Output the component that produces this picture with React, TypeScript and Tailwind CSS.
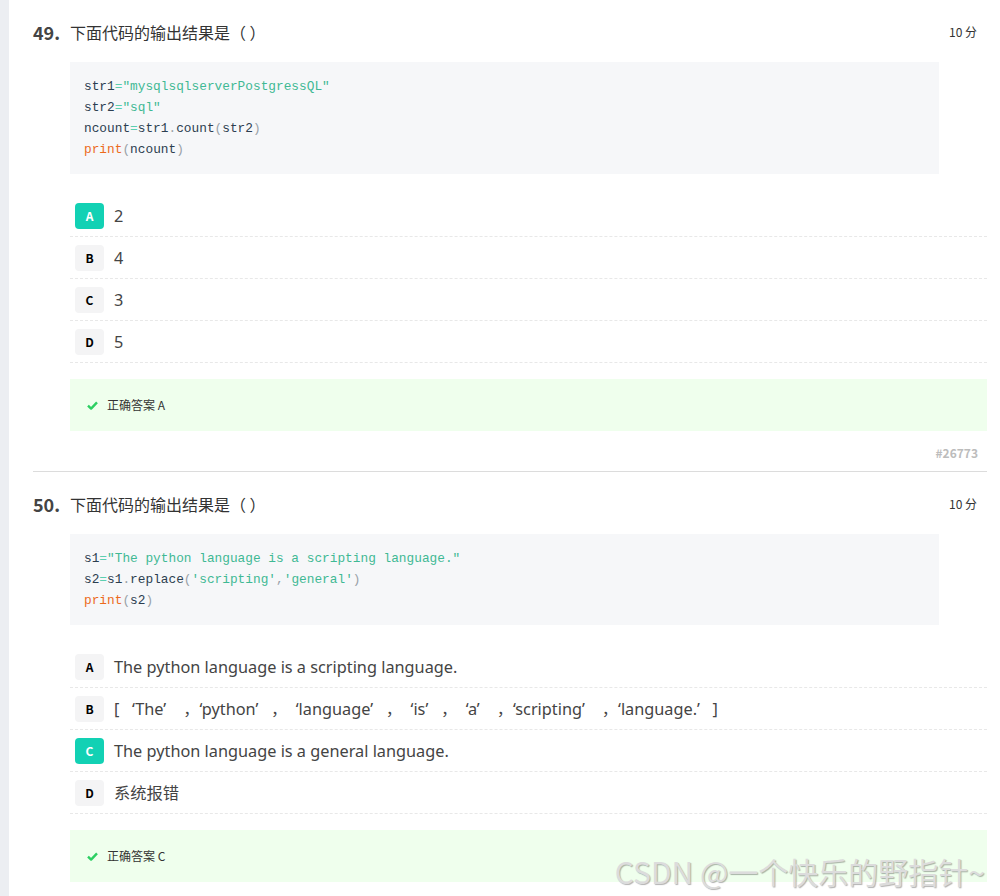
const cjk = "font-['Noto_Sans_CJK_SC',sans-serif]";
const latin = "font-['Noto_Sans','Noto_Sans_CJK_SC',sans-serif]";
const mono = "font-['Liberation_Mono',monospace]";

type Tok = [string, string];

const C = {
  id: "text-[#2c3e50]",
  op: "text-[#5ccfb0]",
  str: "text-[#3fb994]",
  pun: "text-[#9aa2a8]",
  fn: "text-[#ec6a1c]",
};

const q49Code: Tok[][] = [
  [["str1", C.id], ["=", C.op], ['"mysqlsqlserverPostgressQL"', C.str]],
  [["str2", C.id], ["=", C.op], ['"sql"', C.str]],
  [["ncount", C.id], ["=", C.op], ["str1", C.id], [".", C.pun], ["count", C.id], ["(", C.pun], ["str2", C.id], [")", C.pun]],
  [["print", C.fn], ["(", C.pun], ["ncount", C.id], [")", C.pun]],
];

const q50Code: Tok[][] = [
  [["s1", C.id], ["=", C.op], ['"The python language is a scripting language."', C.str]],
  [["s2", C.id], ["=", C.op], ["s1", C.id], [".", C.pun], ["replace", C.id], ["(", C.pun], ["'scripting'", C.str], [",", C.pun], ["'general'", C.str], [")", C.pun]],
  [["print", C.fn], ["(", C.pun], ["s2", C.id], [")", C.pun]],
];

const questions = [
  {
    num: "49.",
    code: q49Code,
    options: ["2", "4", "3", "5"],
    answer: "A",
    id: "#26773",
  },
  {
    num: "50.",
    code: q50Code,
    options: [
      "The python language is a scripting language.",
      "[   ‘The’    ，‘python’   ，  ‘language’   ，  ‘is’   ，  ‘a’    ，‘scripting’    ，‘language.’   ]",
      "The python language is a general language.",
      "系统报错",
    ],
    answer: "C",
    id: "",
  },
];

const letters = ["A", "B", "C", "D"];

const CheckMark = () => (
  <svg width="11" height="9" viewBox="0 0 11 9">
    <path d="M1 4.6 L4.1 7.6 L10 1.4" fill="none" stroke="#2ccf62" strokeWidth="2.4" strokeLinejoin="round" />
  </svg>
);

const Question = ({ q, last }: { q: (typeof questions)[number]; last: boolean }) => {
  return (
    <section className={last ? "pt-[20px]" : "border-b border-[#dcdcdc] pt-[20px]"}>
      <div className="flex h-[24px] items-center">
        <span className={`w-[37px] text-[18px] font-bold text-[#444] ${cjk}`}>{q.num}</span>
        <span className={`flex-1 whitespace-pre text-[16px] text-[#333] ${cjk}`}>下面代码的输出结果是（ ）</span>
        <span className={`pr-[10px] text-[12px] text-[#333] ${cjk}`}>10 分</span>
      </div>

      <div className={`ml-[37px] mr-[48px] mt-[18px] bg-[#f6f7f9] px-[14px] py-[14px] text-[12.8px] leading-[21px] ${mono}`}>
        {q.code.map((line, i) => (
          <div key={i} className="whitespace-pre">
            {line.map(([t, c], j) => (
              <span key={j} className={c}>
                {t}
              </span>
            ))}
          </div>
        ))}
      </div>

      <div className="ml-[37px] mt-[21px]">
        {q.options.map((opt, i) => {
          const picked = letters[i] === q.answer;
          return (
            <div key={i} className="flex h-[42px] items-center border-b border-dashed border-[#e8e8e8] pl-[5px]">
              <span
                className={`flex h-[26px] w-[29px] items-center justify-center rounded-[4px] text-[12px] font-bold ${cjk} ${
                  picked ? "bg-[#12d1b4] text-white" : "bg-[#f4f4f5] text-black"
                }`}
              >
                {letters[i]}
              </span>
              <span className={`ml-[10px] whitespace-pre pt-[1px] text-[16.3px] text-[#444] ${latin}`}>{opt}</span>
            </div>
          );
        })}
      </div>

      <div className="ml-[37px] mt-[16px] flex h-[52px] items-center gap-[9px] bg-[#efffed] pl-[17px]">
        <CheckMark />
        <span className={`text-[12px] text-[#333] ${cjk}`}>正确答案 {q.answer}</span>
      </div>

      {q.id ? (
        <div className={`mt-[14px] mb-[10px] pr-[9px] text-right text-[12px] font-bold leading-[16px] text-[#bcbcbc] ${cjk}`}>
          {q.id}
        </div>
      ) : null}
    </section>
  );
};

export default function App() {
  return (
    <div className="relative flex min-h-[896px] overflow-hidden bg-white">
      <div className="w-[9px] shrink-0 bg-[#eceef2]" />
      <main className="flex-1 pl-[24px] pr-[13px]">
        {questions.map((q, i) => (
          <Question key={q.num} q={q} last={i === questions.length - 1} />
        ))}
      </main>
      <div
        className={`absolute bottom-[7px] right-[15px] text-[30px] leading-[36px] text-[#dcdcdc] [text-shadow:1px_1px_1px_rgba(0,0,0,0.3)] ${cjk}`}
      >
        CSDN @一个快乐的野指针~
      </div>
    </div>
  );
}
